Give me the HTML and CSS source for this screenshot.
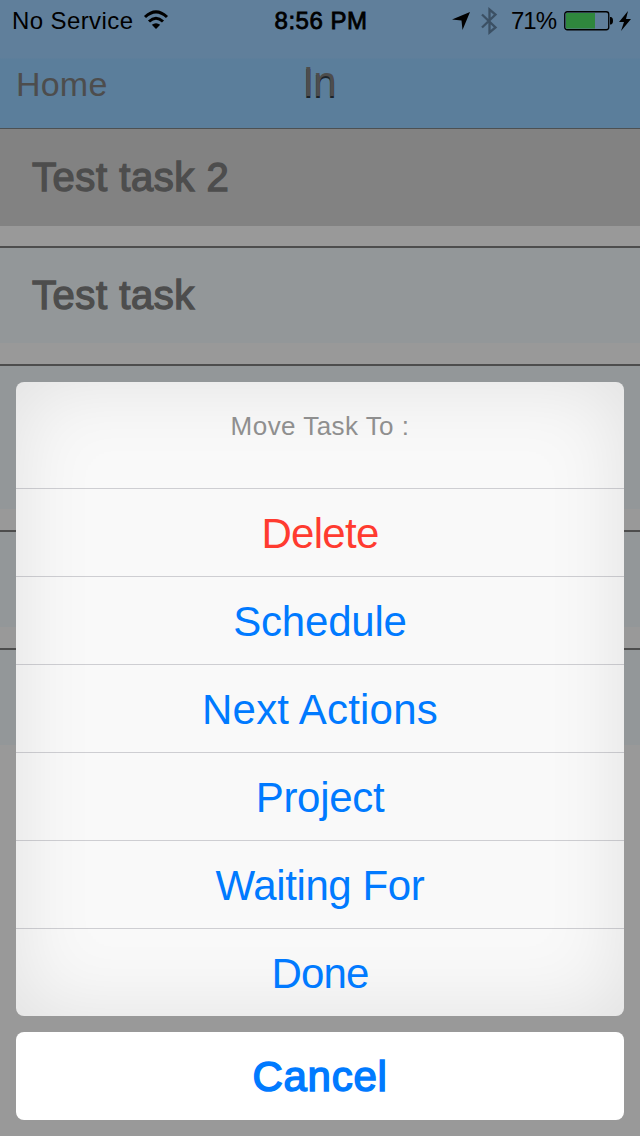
FILE: index.html
```
<!DOCTYPE html>
<html lang="en">
<head>
<meta charset="utf-8">
<title>In</title>
<link rel="stylesheet" href="styles.css">
</head>
<body>
<div class="screen">
  <header class="header">
    <div class="status">
      <div class="status-left"><span class="carrier">No Service</span>
        <svg class="wifi" width="26" height="20" viewBox="0 0 26 20"><g fill="none" stroke="#000" stroke-width="3"><path d="M2 7Q13-3.200 24 7"/><path d="M6 11.500Q13 5 20 11.500"/></g><path d="M8.800 14.800Q13 11.500 17.200 14.800L13 19Z"/></svg>
      </div>
      <span class="clock">8:56 PM</span>
      <div class="status-right">
        <svg class="arrow" width="18" height="18" viewBox="0 0 18 18"><path d="M18 0L10.500 18L9.500 8.500L0 7.500Z"/></svg>
        <svg class="bluetooth" width="17" height="28" viewBox="0 0 17 28"><path d="M1 7.500L14.500 20.500L8.500 25.500V2.500L14.500 7.500L1 20.500" fill="none" stroke="#3b5064" stroke-width="2.300"/></svg>
        <span class="percent">71%</span>
        <svg class="battery" width="50" height="20" viewBox="0 0 50 20"><rect x=".75" y=".75" width="44" height="18" rx="2.500" fill="none" stroke="#000" stroke-width="1.300"/><rect x="2" y="2" width="29" height="15.500" fill="#2f873d"/><path d="M46 6H47Q49 6.500 49 9.800T47 13.500H46Z"/></svg>
        <svg class="bolt" width="12" height="20" viewBox="0 0 12 20"><path d="M9 0L0 11H5L2 20L12 8H7Z"/></svg>
      </div>
    </div>
    <nav class="nav"><span class="back">Home</span><h1 class="title">In</h1><span></span></nav>
  </header>
  <ul class="tasks">
    <li class="task task-selected"><span class="task-name">Test task 2</span></li>
    <li class="task"><span class="task-name">Test task</span></li>
    <li class="task task-tall"></li>
    <li class="task"></li>
    <li class="task"></li>
  </ul>
  <div class="sheet">
    <div class="options">
      <div class="prompt"><span>Move Task To :</span></div>
      <div class="option delete"><span>Delete</span></div>
      <div class="option schedule"><span>Schedule</span></div>
      <div class="option next"><span>Next Actions</span></div>
      <div class="option project"><span>Project</span></div>
      <div class="option waiting"><span>Waiting For</span></div>
      <div class="option done"><span>Done</span></div>
    </div>
    <div class="cancel"><span>Cancel</span></div>
  </div>
</div>
</body>
</html>
```
FILE: styles.css
```
* { box-sizing: border-box; }
body { margin: 0; font-family: "Liberation Sans", Arial, sans-serif; }
.screen { position: relative; width: 640px; height: 1136px; overflow: hidden; background: #999; }
.header { height: 129px; border-bottom: 1px solid #4d5052; background: linear-gradient(#607f9b 0 58px, #5b7e9b 59px); }
.status { display: grid; grid-template-columns: 1fr auto 1fr; height: 40px; align-items: center; padding: 2px 9px 0 12px; font-size: 24px; line-height: 28px; }
.status-left, .status-right { display: flex; align-items: center; }
.status-left { gap: 10px; }
.carrier { letter-spacing: .4px; }
.wifi { margin-top: -3px; }
.clock { margin-right: 1px; font-size: 24px; letter-spacing: .5px; -webkit-text-stroke: .8px #000; }
.status-right { justify-content: flex-end; }
.bluetooth { margin: -1px 13px 0 11px; }
.percent { letter-spacing: -1px; }
.battery { margin-left: 8px; }
.bolt { margin-left: 5px; }
.nav { display: grid; grid-template-columns: 1fr auto 1fr; height: 88px; padding: 0 16px; align-items: center; color: #4d4d4d; }
.back { font-size: 34px; letter-spacing: .2px; }
.title { margin: -4px 2px 0 0; font-weight: normal; font-size: 42px; letter-spacing: -1px; text-shadow: 0 2px #1d242a; }
.tasks { display: flex; flex-direction: column; gap: 21px; margin: 0; padding: 0; list-style: none; }
.task { height: 97px; border-top: 2px solid #4d4d4d; padding: 24px 32px; background: #939799; color: #4d4d4d; }
.task-selected { height: 97px; border: 0; margin-bottom: -1px; background: #828282; padding-top: 25px; }
.task-tall { height: 145px; }
.task-name { display: block; font-size: 40px; line-height: 46px; letter-spacing: .55px; -webkit-text-stroke: 1.400px #4d4d4d; }
.sheet { position: absolute; left: 16px; right: 16px; top: 382px; display: flex; flex-direction: column; gap: 16px; text-align: center; color: #007aff; }
.options { height: 634px; border-radius: 8px; background: #f9f9f9; box-shadow: inset 0 0 80px rgba(0, 0, 0, .1); overflow: hidden; }
.prompt { height: 106px; padding-top: 29px; font-size: 26px; line-height: 30px; letter-spacing: .45px; color: #8f8f8f; }
.option { height: 88px; border-top: 1px solid rgba(105, 105, 120, .3); font-size: 42px; line-height: 90px; }
.cancel { height: 88px; border-radius: 8px; background: #fff; font-size: 42px; line-height: 90px; letter-spacing: .7px; -webkit-text-stroke: 1.500px #007aff; }
.delete { color: #ff3b30; letter-spacing: -.7px; }
.schedule { letter-spacing: -.2px; }
.next { letter-spacing: .2px; }
.project { letter-spacing: -.3px; }
.waiting { letter-spacing: -.4px; }
.done { letter-spacing: -.9px; }
```
